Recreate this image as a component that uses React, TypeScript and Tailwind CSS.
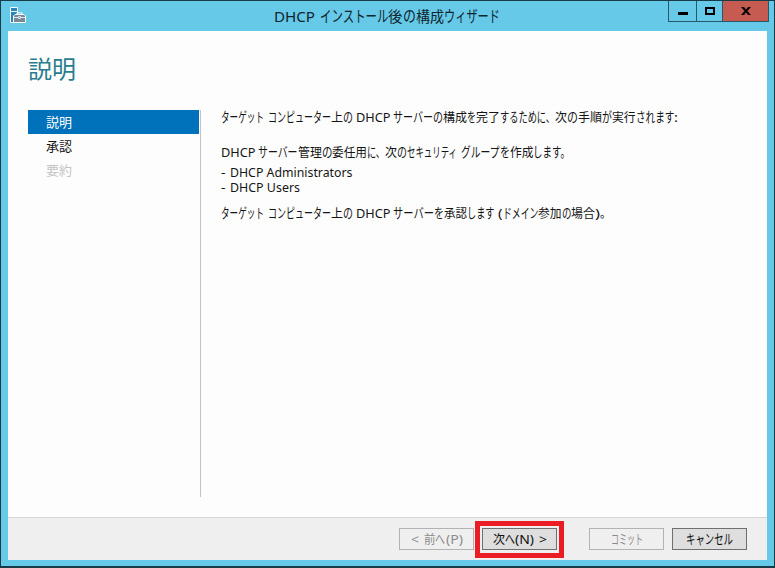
import { useLayoutEffect, useRef } from 'react';

type Run = [text: string, width: number];

const isKana = (text: string) => /^[\u3040-\u30ff]/.test(text);

/** One run of glyphs condensed or widened to an exact advance width. */
function Glyphs({ text, width }: { text: string; width: number }) {
  const ref = useRef<HTMLSpanElement>(null);
  useLayoutEffect(() => {
    const el = ref.current;
    if (!el) return;
    const fit = () => {
      el.style.transform = 'none';
      const natural = el.getBoundingClientRect().width;
      if (natural > 0) el.style.transform = `scaleX(${width / natural})`;
    };
    fit();
    document.fonts.ready.then(fit);
  }, [text, width]);
  return (
    <span className="inline-block" style={{ width }}>
      <span ref={ref} className={`inline-block origin-left whitespace-pre ${isKana(text) ? 'text-[1.1em]' : ''}`}>{text}</span>
    </span>
  );
}

function Line({ runs, className = '' }: { runs: Run[]; className?: string }) {
  return (
    <div className={`flex items-baseline whitespace-pre ${className}`}>
      {runs.map(([text, width], i) => (
        <Glyphs key={i} text={text} width={width} />
      ))}
    </div>
  );
}

const title: Run[] = [['DHCP', 41], [' ', 4.5], ['インストール', 68.5], ['後', 14.5], ['の', 13], ['構成', 28], ['ウィザード', 56]];

const targetServer: Run[] = [['ターゲット', 43], [' ', 4], ['コンピューター', 63], ['上', 12], ['の', 10], [' ', 3], ['DHCP', 34.5], [' ', 2.5]];

const intro: Run[] = [
  ...targetServer,
  ['サーバーの', 50], ['構成', 24], ['を', 9], ['完了', 24], ['するために、', 55], ['次', 12], ['の', 11],
  ['手順', 24], ['が', 10], ['実行', 23.5], ['されます', 38.5], [':', 4],
];

const groups: Run[] = [
  ['DHCP', 34.5], [' ', 2.5], ['サーバー', 39.5], ['管理', 24], ['の', 10.5], ['委任用', 35], ['に、', 18],
  ['次', 12], ['の', 10], ['セキュリティ', 50], [' ', 4], ['グループ', 38.5], ['を', 10], ['作成', 23.5], ['します。', 37],
];

const authorize: Run[] = [
  ...targetServer,
  ['サーバー', 41], ['を', 10], ['承認', 23], ['します', 27.5], [' ', 3.5], ['(', 4.5], ['ドメイン', 35.5],
  ['参加', 23.5], ['の', 9.5], ['場合', 24], [')', 5], ['。', 11],
];

function Button({ runs, kind, className = '' }: { runs: Run[]; kind: 'on' | 'off'; className?: string }) {
  const look =
    kind === 'on'
      ? 'border-[#6f6f6f] bg-[#dedede] text-[#111]'
      : 'border-[#b3b3b3] bg-[#efefef] text-[#8b8b8b]';
  return (
    <button className={`flex h-[22px] w-[75px] shrink-0 items-center justify-center border text-[12.5px] leading-5 ${look} ${className}`}>
      <Line runs={runs} className="pt-px" />
    </button>
  );
}

function AppIcon() {
  return (
    <svg width="16" height="17" viewBox="0 0 16 17" className="shrink-0">
      <path d="M.5.5h7v15h-7z" fill="#2c83b5" stroke="#eefaff" />
      <path d="M1 4.500h6" stroke="#eefaff" />
      <path d="M3.500 9 5 7.500h9L15.500 9v6.500h-12z" fill="#7d8796" stroke="#f4fbff" />
      <path d="M7 8V5.800h5V8" fill="none" stroke="#f4fbff" />
      <path d="M4 10.500h11" fill="none" stroke="#dce7ee" />
      <path d="M8.500 9.500h2v2h-2z" fill="#7d8796" stroke="#dce7ee" />
    </svg>
  );
}

export default function App() {
  return (
    <div className="flex h-[568px] w-[775px] flex-col overflow-hidden border border-b-2 border-[#173c48] bg-[#65c9e7] px-[7px] pb-[6px] font-['Noto_Sans','Noto_Sans_CJK_JP',sans-serif] text-[#151515]">
      <header className="flex h-[30px] shrink-0 items-start">
        <div className="ml-[2px] pt-[6px]"><AppIcon /></div>
        <Line runs={title} className="ml-[248px] pt-[5px] text-[14.5px] leading-5 text-[#10262e]" />
        <div className="-mr-[2px] ml-auto flex h-[21px] border-x border-b border-[#25596a]">
          <button className="flex w-[28px] items-center justify-center border-r border-[#25596a]">
            <span className="mt-[5px] h-[3px] w-[10px] bg-black" />
          </button>
          <button className="flex w-[26px] items-center justify-center border-r border-[#25596a]">
            <span className="h-[8px] w-[10px] border-2 border-black" />
          </button>
          <button className="flex w-[45px] items-center justify-center bg-[#c65b52]">
            <svg width="10" height="8" viewBox="0 0 10 8">
              <path d="M0 0h3l2 2.500L7 0h3L6.500 4 10 8H7L5 5.500 3 8H0l3.500-4z" fill="#0b0505" />
            </svg>
          </button>
        </div>
      </header>

      <main className="flex min-h-0 flex-1 flex-col bg-[#fdfdfd]">
        <h1 className="h-[79px] shrink-0 pt-[20px] pl-[20px] text-[24px] leading-[36px] text-[#2a7c90]">
          <Line runs={[['説明', 48]]} />
        </h1>
        <div className="flex h-[387px] shrink-0 pl-[20px]">
          <nav className="w-[173px] border-r border-[#c2c2c2] pr-px text-[13px] leading-6">
            <div className="h-6 bg-[#0072bc] pl-[18px] text-white">説明</div>
            <div className="h-6 pl-[18px]">承認</div>
            <div className="h-6 pl-[18px] text-[#c4c4c4]">要約</div>
          </nav>
          <section className="-mt-px pl-[20px] text-[12.5px] leading-[15px]">
            <Line runs={intro} className="h-[15px]" />
            <Line runs={groups} className="mt-[20px] h-[15px]" />
            <Line runs={[['-', 4.5], [' ', 4], ['DHCP Administrators', 122.5]]} className="mt-[6px] h-[15px]" />
            <Line runs={[['-', 4.5], [' ', 4], ['DHCP Users', 70]]} className="h-[15px]" />
            <Line runs={authorize} className="mt-[10px] h-[15px]" />
          </section>
        </div>
      </main>

      <footer className="flex h-[43px] shrink-0 items-center border-t border-[#d5d5d5] bg-[#efefef] pl-[391px]">
        <Button kind="off" runs={[['<', 8], [' ', 5], ['前', 11.5], ['へ', 10], ['(P)', 17]]} />
        <div className="ml-px flex h-[37px] w-[89px] shrink-0 items-center justify-center border-[5px] border-[#ea1c24]">
          <Button kind="on" runs={[['次', 12], ['へ', 10], ['(N)', 19], [' ', 5], ['>', 8]]} />
        </div>
        <Button kind="off" runs={[['コミット', 32]]} className="ml-[25px]" />
        <Button kind="on" runs={[['キャンセル', 47]]} className="ml-[8px]" />
      </footer>
    </div>
  );
}
